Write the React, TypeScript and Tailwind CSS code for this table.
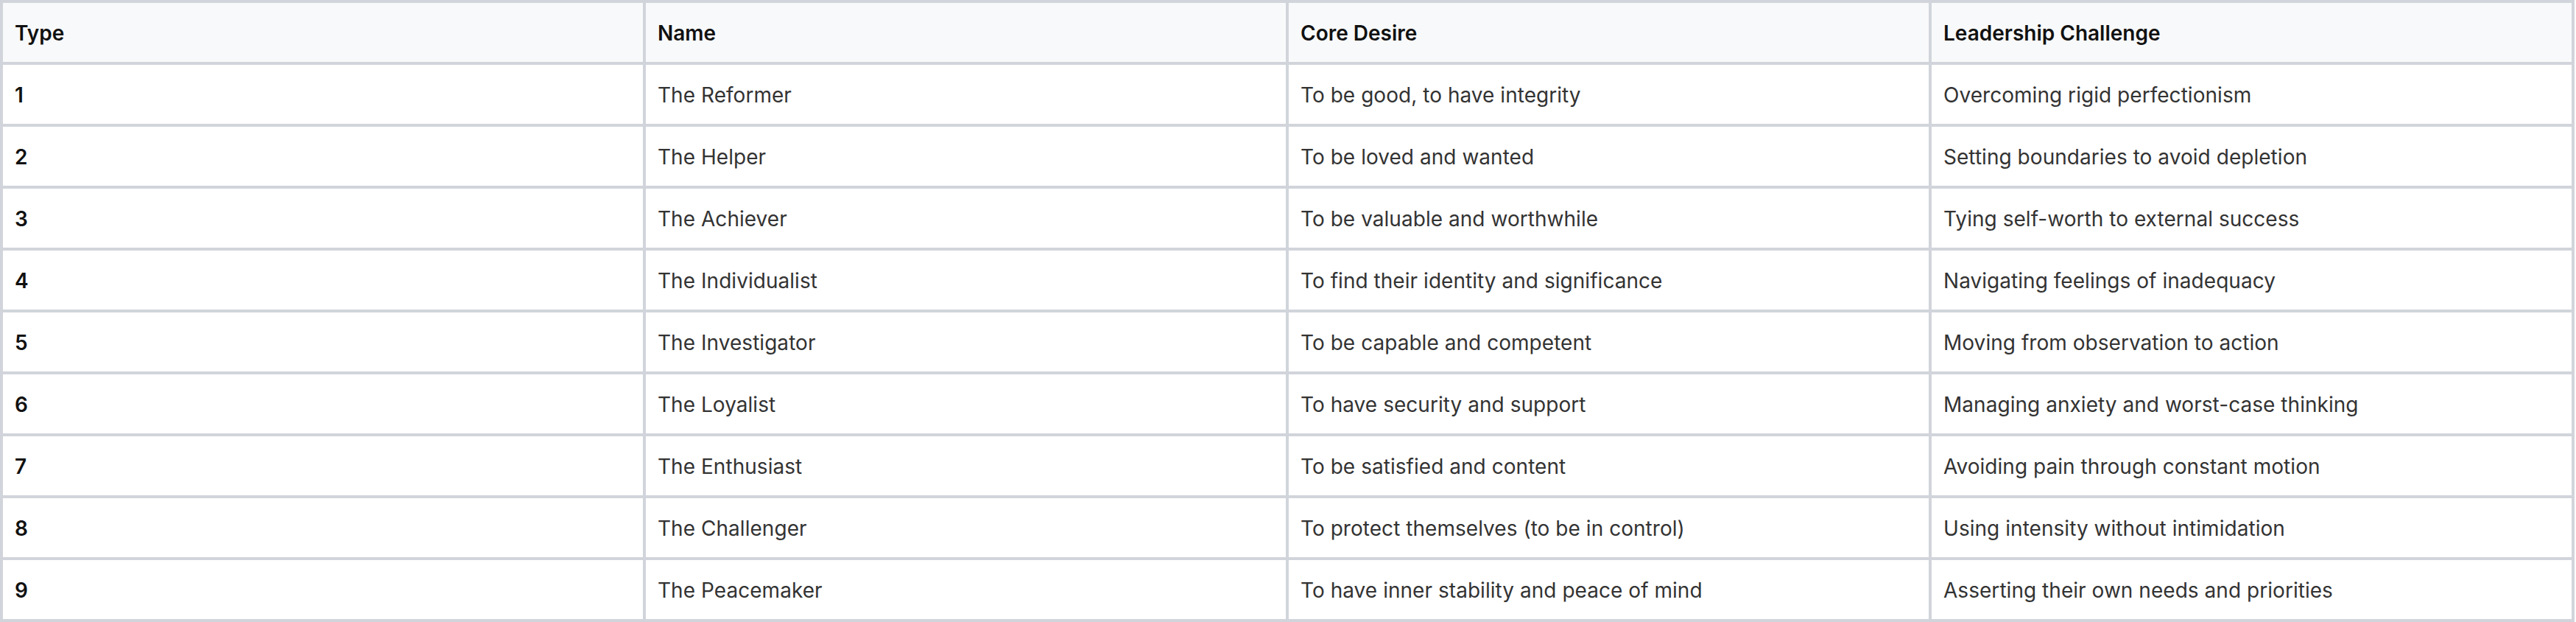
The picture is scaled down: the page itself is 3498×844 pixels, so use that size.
import React from "react";

const rows: [string, string, string, string][] = [
  ["1", "The Reformer", "To be good, to have integrity", "Overcoming rigid perfectionism"],
  ["2", "The Helper", "To be loved and wanted", "Setting boundaries to avoid depletion"],
  ["3", "The Achiever", "To be valuable and worthwhile", "Tying self-worth to external success"],
  ["4", "The Individualist", "To find their identity and significance", "Navigating feelings of inadequacy"],
  ["5", "The Investigator", "To be capable and competent", "Moving from observation to action"],
  ["6", "The Loyalist", "To have security and support", "Managing anxiety and worst-case thinking"],
  ["7", "The Enthusiast", "To be satisfied and content", "Avoiding pain through constant motion"],
  ["8", "The Challenger", "To protect themselves (to be in control)", "Using intensity without intimidation"],
  ["9", "The Peacemaker", "To have inner stability and peace of mind", "Asserting their own needs and priorities"],
];

const headers = ["Type", "Name", "Core Desire", "Leadership Challenge"];

export default function App() {
  return (
    <div className="bg-white" style={{ fontFamily: "Inter, 'Noto Sans', sans-serif" }}>
      <div className="w-[3496px] grid grid-cols-4 gap-1 p-1 bg-[#d1d5db]">
        {headers.map((h) => (
          <div
            key={h}
            className="h-[80px] flex items-center px-4 pt-[2px] bg-[#f8f9fa] text-[28px] font-semibold text-[#111111]"
          >
            {h}
          </div>
        ))}
        {rows.map((r) =>
          r.map((c, i) => (
            <div
              key={r[0] + "-" + i}
              className={
                "h-[80px] flex items-center px-4 pt-[2px] bg-white text-[28px] tracking-[0.04px] " +
                (i === 0 ? "font-semibold text-[#111111]" : "text-[#333333]")
              }
            >
              {c}
            </div>
          ))
        )}
      </div>
    </div>
  );
}
